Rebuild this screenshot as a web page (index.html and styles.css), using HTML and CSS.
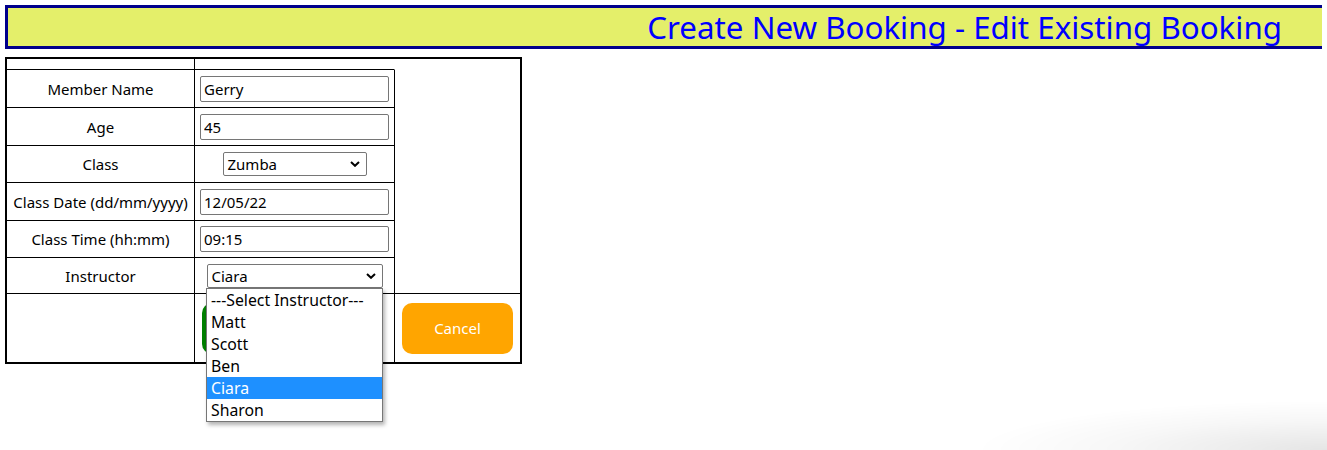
FILE: index.html
```html
<!DOCTYPE html>
<html lang="en">
<head>
<meta charset="utf-8">
<title>Booking</title>
<link rel="stylesheet" href="styles.css">
</head>
<body>
<header class="banner"><h1>Create New Booking - Edit Existing Booking</h1></header>
<div class="form-wrap">
<table class="booking">
  <colgroup><col class="c1"><col class="c2"><col class="c3"></colgroup>
  <tr class="r-top">
    <td class="cell bd"></td>
    <td class="cell bd no-r"></td>
    <td class="cell side" rowspan="7"></td>
  </tr>
  <tr class="r38">
    <td class="cell bd label">Member Name</td>
    <td class="cell bd field"><input class="text" type="text" value="Gerry"></td>
  </tr>
  <tr class="r38">
    <td class="cell bd label">Age</td>
    <td class="cell bd field"><input class="text" type="text" value="45"></td>
  </tr>
  <tr class="r37">
    <td class="cell bd label">Class</td>
    <td class="cell bd field">
      <div class="select sel-class"><span>Zumba</span>
        <svg class="chev" width="10" height="6" viewBox="0 0 10 6"><path d="M1 1 L5 4.8 L9 1" fill="none" stroke="#000" stroke-width="2"/></svg>
      </div>
    </td>
  </tr>
  <tr class="r38">
    <td class="cell bd label">Class Date (dd/mm/yyyy)</td>
    <td class="cell bd field"><input class="text" type="text" value="12/05/22"></td>
  </tr>
  <tr class="r37">
    <td class="cell bd label">Class Time (hh:mm)</td>
    <td class="cell bd field"><input class="text" type="text" value="09:15"></td>
  </tr>
  <tr class="r36">
    <td class="cell bd label">Instructor</td>
    <td class="cell bd field">
      <div class="select sel-instr"><span>Ciara</span>
        <svg class="chev" width="10" height="6" viewBox="0 0 10 6"><path d="M1 1 L5 4.8 L9 1" fill="none" stroke="#000" stroke-width="2"/></svg>
      </div>
    </td>
  </tr>
  <tr class="r-btn">
    <td class="cell br"></td>
    <td class="cell br btn-cell"><button class="btn green">Submit</button></td>
    <td class="cell btn-cell"><button class="btn orange">Cancel</button></td>
  </tr>
</table>
<ul class="dropdown">
  <li>---Select Instructor---</li>
  <li>Matt</li>
  <li>Scott</li>
  <li>Ben</li>
  <li class="active">Ciara</li>
  <li>Sharon</li>
</ul>
</div>
<div class="curl"></div>
</body>
</html>
```
FILE: styles.css
```css
html {
  background: #fff;
  overflow: hidden;
}
body {
  margin: 5px;
  min-height: 430px;
  font-family: "Noto Sans", "Open Sans", sans-serif;
  color: #000;
}
.banner {
  box-sizing: border-box;
  width: calc(100% + 10px);
  height: 44px;
  border: 3px solid #00008b;
  background: #e4ef6a;
  padding-right: 47px;
  text-align: right;
}
.banner h1 {
  margin: 0;
  font-size: 31.3px;
  font-weight: normal;
  line-height: 38px;
  color: #0000ff;
  white-space: nowrap;
}
.form-wrap {
  position: relative;
  display: inline-block;
  margin-top: 8px;
}
.booking {
  border: 2px solid #000;
  border-spacing: 0;
  table-layout: fixed;
  width: 517px;
}
.c1 { width: 188px; }
.c2 { width: 200px; }
.c3 { width: 125px; }
.cell {
  padding: 0;
  vertical-align: middle;
}
.bd {
  border-right: 1px solid #000;
  border-bottom: 1px solid #000;
}
.no-r { border-right-color: transparent; }
.br { border-right: 1px solid #000; }
.side { border-bottom: 1px solid #000; }
.r-top { height: 11px; }
.r38 { height: 38px; }
.r37 { height: 37px; }
.r36 { height: 36px; }
.r-btn { height: 68px; }
.label {
  text-align: center;
  font-size: 15px;
  white-space: nowrap;
}
.field { text-align: center; }
.text {
  box-sizing: border-box;
  width: 189px;
  height: 26px;
  border: 1px solid #767676;
  border-radius: 2px;
  padding: 0 3px;
  font-family: inherit;
  font-size: 15px;
  color: #000;
  display: block;
  margin: 0 auto;
}
.select {
  box-sizing: border-box;
  display: flex;
  align-items: center;
  justify-content: space-between;
  height: 24px;
  margin: 0 auto;
  border: 1px solid #767676;
  border-radius: 2px;
  background: #fff;
  padding: 0 6px 0 4px;
  font-size: 15px;
  text-align: left;
}
.sel-class { width: 144px; }
.sel-instr { width: 176px; }
.chev { display: block; flex: none; }
.dropdown {
  position: absolute;
  left: 201px;
  top: 231px;
  z-index: 2;
  box-sizing: border-box;
  width: 177px;
  margin: 0;
  padding: 0;
  list-style: none;
  background: #fff;
  border: 1px solid #767676;
  box-shadow: 2px 3px 4px rgba(0,0,0,0.3);
}
.dropdown li {
  height: 22px;
  line-height: 22px;
  padding-left: 4px;
  font-size: 15.8px;
  white-space: nowrap;
}
.dropdown li.active {
  background: #1e90ff;
  color: #fff;
}
.btn-cell {
  padding-left: 7px;
  text-align: left;
}
.btn {
  display: block;
  width: 111px;
  height: 51px;
  border: none;
  border-radius: 10px;
  color: #fff;
  font-family: inherit;
  font-size: 15px;
}
.green { background: #008000; }
.orange { background: #ffa500; }
.curl {
  position: fixed;
  right: 0;
  bottom: 0;
  width: 470px;
  height: 55px;
  background: radial-gradient(ellipse 75% 90% at 100% 100%, rgba(0,0,0,0.1), rgba(0,0,0,0.03) 60%, rgba(0,0,0,0) 100%);
  pointer-events: none;
}
```
